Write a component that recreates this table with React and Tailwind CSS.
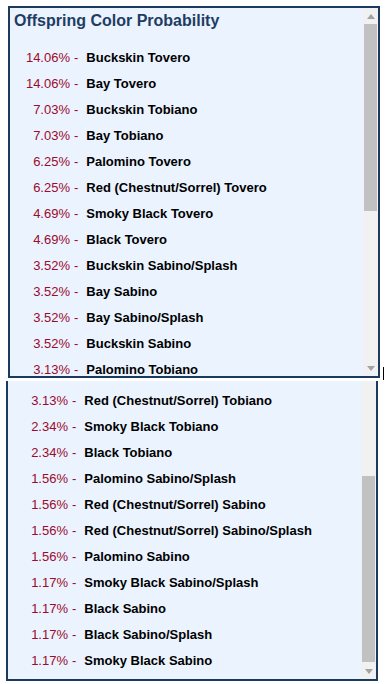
import React from "react";

const topRows = [
  ["14.06%", "Buckskin Tovero"],
  ["14.06%", "Bay Tovero"],
  ["7.03%", "Buckskin Tobiano"],
  ["7.03%", "Bay Tobiano"],
  ["6.25%", "Palomino Tovero"],
  ["6.25%", "Red (Chestnut/Sorrel) Tovero"],
  ["4.69%", "Smoky Black Tovero"],
  ["4.69%", "Black Tovero"],
  ["3.52%", "Buckskin Sabino/Splash"],
  ["3.52%", "Bay Sabino"],
  ["3.52%", "Bay Sabino/Splash"],
  ["3.52%", "Buckskin Sabino"],
  ["3.13%", "Palomino Tobiano"],
];

const bottomRows = [
  ["3.13%", "Red (Chestnut/Sorrel) Tobiano"],
  ["2.34%", "Smoky Black Tobiano"],
  ["2.34%", "Black Tobiano"],
  ["1.56%", "Palomino Sabino/Splash"],
  ["1.56%", "Red (Chestnut/Sorrel) Sabino"],
  ["1.56%", "Red (Chestnut/Sorrel) Sabino/Splash"],
  ["1.56%", "Palomino Sabino"],
  ["1.17%", "Smoky Black Sabino/Splash"],
  ["1.17%", "Black Sabino"],
  ["1.17%", "Black Sabino/Splash"],
  ["1.17%", "Smoky Black Sabino"],
];

function Row({ pct, name }) {
  return (
    <div className="flex h-[26px] items-center whitespace-nowrap text-[13px] leading-[26px]">
      <span className="w-[56px] text-right text-[#9c0a2c]">{pct}</span>
      <span className="ml-[4px] text-[#9c0a2c]">-</span>
      <span className="ml-[8px] font-bold text-black">{name}</span>
    </div>
  );
}

function Arrow({ up }) {
  return (
    <div className="flex h-[16px] items-center justify-center">
      <svg width="8" height="5" viewBox="0 0 8 5">
        <path d={up ? "M0 5 L4 0 L8 5 Z" : "M0 0 L4 5 L8 0 Z"} fill="#a3a3a3" />
      </svg>
    </div>
  );
}

export default function App() {
  return (
    <div
      className="relative h-[684px] w-[388px] bg-white"
      style={{ fontFamily: '"Liberation Sans", Arial, sans-serif' }}
    >
      <div className="pl-[8px] pt-[6px]">
        <div className="flex h-[372px] w-[372px] border-2 border-[#1c3a5e] bg-[#eaf3fe]">
          <div className="flex-1 overflow-hidden pl-[4px]">
            <div className="mt-[3px] text-[16px] font-bold leading-5 text-[#1f3d63]">
              Offspring Color Probability
            </div>
            <div className="mt-[14px]">
              {topRows.map(([p, n], i) => (
                <Row key={i} pct={p} name={n} />
              ))}
            </div>
          </div>
          <div className="flex w-[15px] flex-col bg-[#f1f1f1]">
            <Arrow up />
            <div className="mx-[1px] h-[187px] bg-[#c1c1c1]" />
            <div className="flex-1" />
            <Arrow />
          </div>
        </div>
      </div>

      <div className="pl-[6px] pt-[3px]">
        <div className="flex h-[300px] w-[372px] border-x-2 border-b-2 border-[#1c3a5e] bg-[#eaf3fe]">
          <div className="flex-1 overflow-hidden pl-[4px] pt-[7px]">
            {bottomRows.map(([p, n], i) => (
              <Row key={i} pct={p} name={n} />
            ))}
          </div>
          <div className="flex w-[15px] flex-col bg-[#f1f1f1]">
            <div className="h-[95px]" />
            <div className="mx-[1px] h-[186px] bg-[#c1c1c1]" />
            <div className="flex-1" />
            <Arrow />
          </div>
        </div>
      </div>

      <div className="absolute left-[383px] top-[367px] h-[13px] w-[1px] bg-black" />
    </div>
  );
}
